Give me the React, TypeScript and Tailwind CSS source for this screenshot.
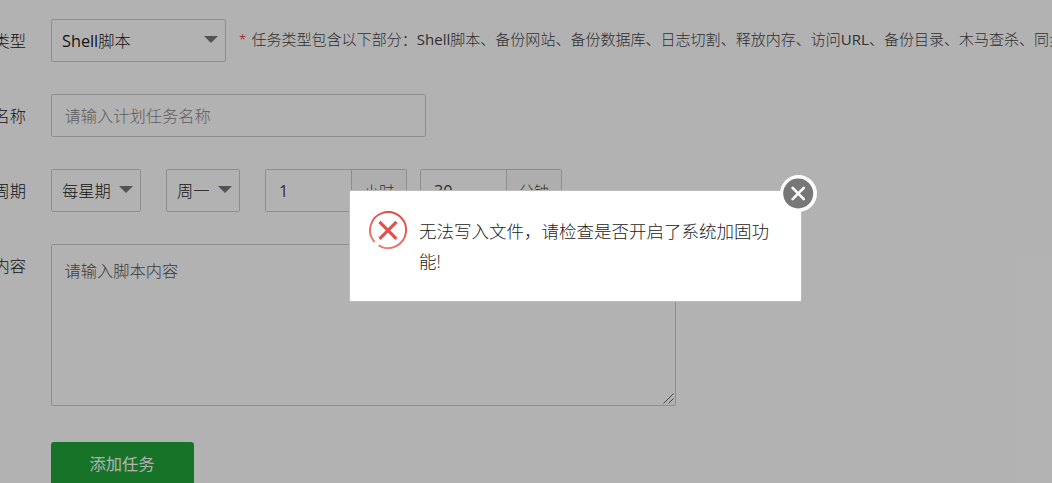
import { clsx } from 'clsx'
import type { ReactNode } from 'react'

interface FormRowProps {
  label: string
  className?: string
  children: ReactNode
}

function FormRow({ label, className, children }: FormRowProps) {
  return (
    <div className={clsx('flex', className)}>
      <div className="flex h-[43px] w-[26px] shrink-0 items-center justify-end pt-px whitespace-nowrap text-[#222]">
        {label}
      </div>
      <div className="ml-[25px] flex shrink-0">{children}</div>
    </div>
  )
}

interface SelectButtonProps {
  value: ReactNode
  className?: string
}

function SelectButton({ value, className }: SelectButtonProps) {
  return (
    <button
      className={clsx(
        'flex h-[43px] items-center justify-between rounded-xs border border-[#ccc] bg-white pr-[7px] pl-[10px] whitespace-nowrap text-[#222]',
        className,
      )}>
      <span className="pt-0.5">{value}</span>
      <svg
        className="mb-[3px] h-[7px] w-[14px] shrink-0 fill-[#777]"
        viewBox="0 0 14 7">
        <path d="M0 0h14L7 7z" />
      </svg>
    </button>
  )
}

interface TimeInputProps {
  value: string
  unit: string
  className?: string
}

function TimeInput({ value, unit, className }: TimeInputProps) {
  return (
    <div
      className={clsx(
        'flex h-[43px] w-[142px] overflow-hidden rounded-xs border border-[#ccc]',
        className,
      )}>
      <input
        className="w-[85px] bg-white pt-0.5 pl-[13px] font-normal text-[#444] outline-none"
        defaultValue={value}
      />
      <span className="flex flex-1 items-center justify-center border-l border-[#ccc] bg-[#fafafa] pt-px text-[15px] text-[#444]">
        {unit}
      </span>
    </div>
  )
}

function ErrorMessage() {
  return (
    <div className="absolute top-[190px] left-[349px] flex h-[112px] w-[453px] rounded-xs border border-[#bcbcbc] bg-white pt-5 pl-[18.5px]">
      <svg
        className="h-[38px] w-[38px] shrink-0"
        viewBox="0 0 38 38"
        fill="none">
        <defs>
          <linearGradient id="ring" x1="0.8" y1="0" x2="0.3" y2="1">
            <stop offset="0" stopColor="#df4640" />
            <stop offset="1" stopColor="#ee7f78" />
          </linearGradient>
        </defs>
        <path
          d="M5.6 31A18 18 0 1 1 9.5 34.3"
          stroke="url(#ring)"
          strokeWidth="2"
        />
        <path
          d="M10.5 10.8 27.5 27.8M27.5 10.8 10.5 27.8"
          stroke="#e2534b"
          strokeWidth="3.2"
        />
      </svg>
      <p className="mt-[5px] ml-[12.5px] w-[354px] text-[17.5px] leading-[30px] font-light text-[#222]">
        无法写入文件，请检查是否开启了系统加固功能!
      </p>
      <button className="absolute -top-[16px] -right-[16px]">
        <svg className="h-[37px] w-[37px]" viewBox="0 0 37 37" fill="none">
          <circle cx="18.5" cy="18.5" r="18.5" fill="#fff" />
          <circle cx="18.2" cy="18.5" r="15" fill="#777" />
          <path
            d="m12.6 12.9 11.2 11.2M23.8 12.9 12.6 24.1"
            stroke="#fff"
            strokeWidth="2.6"
            strokeLinecap="round"
          />
        </svg>
      </button>
    </div>
  )
}

export default function App() {
  return (
    <div className="relative h-[483px] w-full overflow-hidden bg-white font-['Open_Sans','Noto_Sans_CJK_SC',sans-serif] text-[16.25px] font-light">
      <div className="flex flex-col gap-8 pt-[19px]">
        <FormRow label="任务类型">
          <SelectButton
            value={
              <>
                <span className="font-normal">Shell</span>脚本
              </>
            }
            className="w-[175px]"
          />
          <div className="ml-[13px] flex h-[41px] items-center text-[15px] whitespace-nowrap text-[#444]">
            <span className="w-[12.5px] text-[13px] text-red-600">*</span>
            <span className="tracking-[0.02px]">
              任务类型包含以下部分：<span className="font-normal">Shell</span>
              脚本、备份网站、备份数据库、日志切割、释放内存、访问
              <span className="font-normal">URL</span>
              、备份目录、木马查杀、同步时间
            </span>
          </div>
        </FormRow>
        <FormRow label="任务名称">
          <input
            className="h-[43px] w-[375px] rounded-xs border border-[#ccc] bg-white px-[12.5px] outline-none placeholder:text-[#888]"
            placeholder="请输入计划任务名称"
          />
        </FormRow>
        <FormRow label="执行周期">
          <SelectButton value="每星期" className="w-[90px]" />
          <SelectButton value="周一" className="ml-[25px] w-[74px]" />
          <TimeInput value="1" unit="小时" className="ml-[25px]" />
          <TimeInput value="30" unit="分钟" className="ml-[13px]" />
        </FormRow>
        <FormRow label="脚本内容">
          <div className="relative flex">
            <textarea
              className="h-[162px] w-[625px] resize-none rounded-xs border border-[#ccc] bg-white px-[12.5px] py-[14px] leading-6 outline-none placeholder:text-[#555]"
              placeholder="请输入脚本内容"
            />
            <svg
              className="absolute right-[2px] bottom-[2px] h-[11px] w-[11px] stroke-[#666]"
              viewBox="0 0 11 11">
              <path d="M.5 10.5l10-10M5.5 10.5l5-5" />
            </svg>
          </div>
        </FormRow>
      </div>
      <button className="mt-9 ml-[51px] h-[46px] w-[143px] rounded-[3px] bg-[#20a53a] pr-px pb-0.5 font-normal text-white">
        添加任务
      </button>
      <div className="absolute inset-0 bg-black/30" />
      <ErrorMessage />
    </div>
  )
}
